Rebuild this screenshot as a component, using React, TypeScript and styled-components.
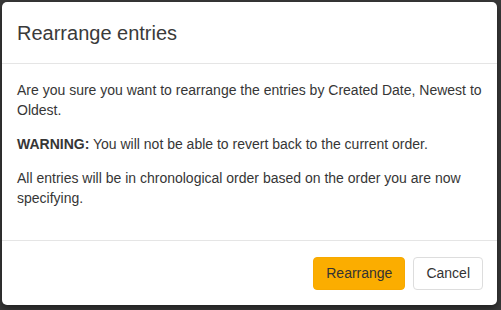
import React from 'react';
import styled, { createGlobalStyle } from 'styled-components';

const GlobalStyle = createGlobalStyle`
  html, body {
    margin: 0;
    padding: 0;
    background: #3a3a3a;
    height: 310px;
    overflow: hidden;
    font-family: "Liberation Sans", Arial, sans-serif;
  }
`;

const Backdrop = styled.div`
  padding: 2px 4px 5px 2px;
`;

const Modal = styled.div`
  width: 495px;
  background: #ffffff;
  border-radius: 5px;
  box-shadow: 0 3px 9px rgba(0, 0, 0, 0.5);
  color: #333333;
`;

const Header = styled.div`
  padding: 20px 15px 19px;
  border-bottom: 1px solid #e5e5e5;
`;

const Title = styled.h4`
  margin: 0;
  font-size: 20px;
  line-height: 22px;
  font-weight: 400;
  color: #3a3a3a;
`;

const Body = styled.div`
  padding: 16px 15px 18px;
  font-size: 14px;
  line-height: 20px;
  color: #363636;
`;

const Para = styled.p`
  margin: 0 0 14px;
`;

const Footer = styled.div`
  display: flex;
  justify-content: flex-end;
  gap: 8px;
  padding: 16px 14px 15px;
  border-top: 1px solid #e5e5e5;
`;

const Button = styled.button<{ $primary?: boolean }>`
  font-family: "Liberation Sans", Arial, sans-serif;
  font-size: 14px;
  line-height: 19px;
  padding: 6px 12px;
  border-radius: 4px;
  border: 1px solid ${p => (p.$primary ? '#f7a900' : '#dddddd')};
  background: ${p => (p.$primary ? '#fbad00' : '#ffffff')};
  color: #333333;
  cursor: pointer;
`;

const App: React.FC = () => (
  <>
    <GlobalStyle />
    <Backdrop>
      <Modal>
        <Header>
          <Title>Rearrange entries</Title>
        </Header>
        <Body>
          <Para>
            Are you sure you want to rearrange the entries by Created Date, Newest to Oldest.
          </Para>
          <Para>
            <b>WARNING:</b> You will not be able to revert back to the current order.
          </Para>
          <Para>
            All entries will be in chronological order based on the order you are now specifying.
          </Para>
        </Body>
        <Footer>
          <Button $primary>Rearrange</Button>
          <Button>Cancel</Button>
        </Footer>
      </Modal>
    </Backdrop>
  </>
);

export default App;
